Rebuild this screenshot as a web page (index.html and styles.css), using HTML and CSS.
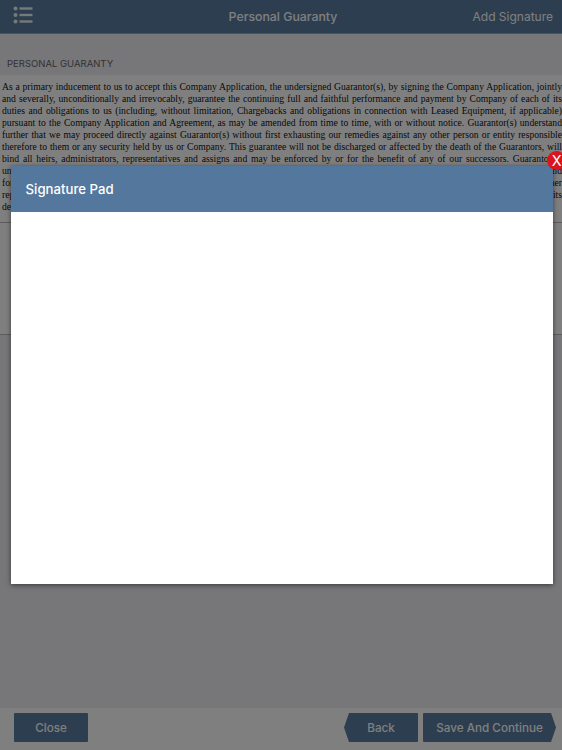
FILE: index.html
```html
<!DOCTYPE html>
<html lang="en">
<head>
<meta charset="utf-8">
<title>Personal Guaranty</title>
<link rel="stylesheet" href="styles.css">
</head>
<body>
<div class="app">
  <header class="topbar">
    <div class="topbar-side">
      <svg class="menu-icon" width="20" height="18" viewBox="0 0 20 18" aria-hidden="true">
        <circle cx="2.5" cy="2.5" r="2" fill="#fff"/>
        <circle cx="2.5" cy="9" r="2" fill="#fff"/>
        <circle cx="2.5" cy="15.5" r="2" fill="#fff"/>
        <rect x="6.5" y="1.3" width="13" height="2.4" fill="#fff"/>
        <rect x="6.5" y="7.8" width="13" height="2.4" fill="#fff"/>
        <rect x="6.5" y="14.3" width="13" height="2.4" fill="#fff"/>
      </svg>
    </div>
    <h1 class="topbar-title">Personal Guaranty</h1>
    <div class="topbar-side topbar-action">Add Signature</div>
  </header>
  <main class="content">
    <h2 class="section-title">PERSONAL GUARANTY</h2>
    <section class="doc">
      <span class="doc-line">As a primary inducement to us to accept this Company Application, the undersigned Guarantor(s), by signing the Company Application, jointly</span>
      <span class="doc-line">and severally, unconditionally and irrevocably, guarantee the continuing full and faithful performance and payment by Company of each of its</span>
      <span class="doc-line">duties and obligations to us (including, without limitation, Chargebacks and obligations in connection with Leased Equipment, if applicable)</span>
      <span class="doc-line">pursuant to the Company Application and Agreement, as may be amended from time to time, with or without notice. Guarantor(s) understand</span>
      <span class="doc-line">further that we may proceed directly against Guarantor(s) without first exhausting our remedies against any other person or entity responsible</span>
      <span class="doc-line">therefore to them or any security held by us or Company. This guarantee will not be discharged or affected by the death of the Guarantors, will</span>
      <span class="doc-line">bind all heirs, administrators, representatives and assigns and may be enforced by or for the benefit of any of our successors. Guarantor(s)</span>
      <span class="doc-line">understand that this guaranty shall remain in full force and effect until all obligations have been paid and performed in their entirety and</span>
      <span class="doc-line">for any renewal, extension or modification of those obligations, and that each Guarantor waives notice of any such change of the other</span>
      <span class="doc-line">representations made by Company, and agrees to pay all costs incurred by us in the enforcement of this guarantee and of any of its</span>
      <span class="doc-line doc-last">default provisions.</span>
    </section>
    <div class="doc-blank"></div>
  </main>
  <footer class="footer">
    <button class="btn" type="button">Close</button>
    <div class="footer-nav">
      <button class="btn btn-back" type="button">Back</button>
      <button class="btn btn-next" type="button">Save And Continue</button>
    </div>
  </footer>
</div>
<div class="overlay">
  <div class="modal">
    <div class="modal-head">Signature Pad</div>
    <div class="modal-body"></div>
    <div class="modal-close">X</div>
  </div>
</div>
</body>
</html>
```
FILE: styles.css
```css
* { box-sizing: border-box; }
html, body { margin: 0; padding: 0; height: 750px; overflow: hidden; }
body { font-family: Inter, "Liberation Sans", sans-serif; position: relative; width: 562px; }
.app { display: flex; flex-direction: column; height: 750px; background: #efedf3; }
.topbar { flex: 0 0 34px; display: flex; align-items: center; justify-content: space-between; background: #587c9f; border-bottom: 1px solid #a0a4ae; color: #fff; padding: 0 9px 0 13px; }
.topbar-side { width: 110px; display: flex; }
.menu-icon { display: block; opacity: .9; margin-bottom: 3px; }
.topbar-title { margin: 0; font-size: 12.3px; font-weight: 500; }
.topbar-action { justify-content: flex-end; font-size: 12px; white-space: nowrap; }
.content { flex: 1; display: flex; flex-direction: column; min-height: 0; }
.section-title { margin: 0; height: 41px; padding: 23px 0 0 7px; font-size: 9.5px; line-height: 14px; font-weight: 400; color: #666; }
.doc { flex: 0 0 148px; background: #fff; border-bottom: 1px solid #bbb; padding: 5.5px 0 0 2px; overflow: hidden; font-family: "Liberation Serif", serif; font-size: 9.65px; line-height: 12px; color: #111; }
.doc-line { display: block; width: 560px; white-space: nowrap; text-align: justify; text-align-last: justify; }
.doc-last { text-align-last: left; }
.doc-blank { flex: 0 0 112px; background: #fff; border-bottom: 1px solid #bbb; }
.footer { flex: 0 0 42px; display: flex; align-items: flex-start; justify-content: space-between; background: #fff; padding: 5px 6px 0 14px; }
.footer-nav { display: flex; gap: 5px; }
.btn { height: 29px; width: 74px; border: 0; border-radius: 1px; background: #587c9f; color: #fff; font-family: inherit; font-size: 11.7px; font-weight: 500; padding: 0; }
.btn-back { clip-path: polygon(5px 0, 100% 0, 100% 100%, 5px 100%, 0 50%); }
.btn-next { width: 133px; clip-path: polygon(0 0, calc(100% - 5px) 0, 100% 50%, calc(100% - 5px) 100%, 0 100%); }
.overlay { position: absolute; inset: 0; background: rgba(0, 0, 0, .5); }
.modal { position: absolute; left: 10.6px; top: 166px; width: 542.6px; height: 418px; background: #fff; box-shadow: 0 1px 5px rgba(0, 0, 0, .55); }
.modal-head { height: 46px; background: #54779d; color: #fff; font-size: 13.2px; font-weight: 500; line-height: 46px; padding-left: 15px; }
.modal-close { position: absolute; top: -15px; right: -13px; width: 19px; height: 19px; border-radius: 50%; background: #dc141e; color: #fff; font-size: 14.5px; font-weight: 400; line-height: 19px; text-align: center; }
```
